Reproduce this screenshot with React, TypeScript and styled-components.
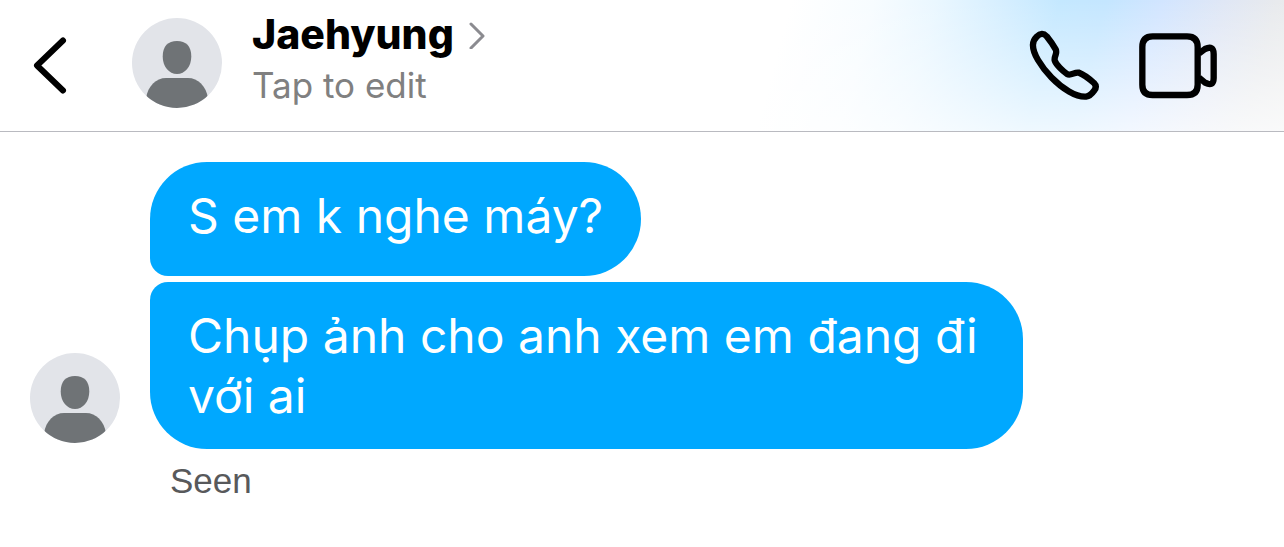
import React from "react";
import styled, { createGlobalStyle } from "styled-components";

const GlobalStyle = createGlobalStyle`
  *, *::before, *::after { box-sizing: border-box; }
  body {
    margin: 0;
    background: #fff;
    font-family: Inter, "Liberation Sans", sans-serif;
  }
`;

const Header = styled.header`
  display: flex;
  align-items: flex-start;
  padding: 0 64px 0 30px;
  min-height: 132px;
  border-bottom: 1px solid #b9bac0;
  background:
    linear-gradient(to bottom, #ffffff00 0%, #ffffff40 35%, #ffffffb8 100%),
    linear-gradient(105deg, #fff calc(100% - 510px), #f7fcff calc(100% - 430px), #eaf7ff calc(100% - 370px), #d4eeff calc(100% - 300px), #c4e8ff calc(100% - 250px), #c4e6ff calc(100% - 205px), #d2e5ff calc(100% - 150px), #e0e7f5 calc(100% - 90px), #e8eaed calc(100% - 40px), #eceded 100%);
`;

const IconButton = styled.button`
  display: flex;
  padding: 0;
  border: 0;
  background: none;
  color: #000;
`;

const BackButton = styled(IconButton)`
  margin: 34px 62px 0 0;
`;

const Contact = styled.div`
  flex: 1;
  display: flex;
  gap: 30px;
`;

const AvatarFrame = styled.div`
  flex: none;
  display: flex;
`;

const HeaderAvatar = styled(AvatarFrame)`
  margin-top: 18px;
`;

const ContactText = styled.div`
  padding-top: 9px;
`;

const NameButton = styled(IconButton)`
  align-items: center;
  gap: 14px;
  font: 800 41px/50px Inter, "Liberation Sans", sans-serif;
`;

const EditLink = styled.a`
  display: block;
  margin-top: 4px;
  color: #808080;
  font: 400 35px/44px Inter, "Liberation Sans", sans-serif;
  text-decoration: none;
`;

const Calls = styled.nav`
  display: flex;
  gap: 35px;
  padding-top: 28px;
`;

const Conversation = styled.main`
  display: flex;
  align-items: flex-end;
  gap: 30px;
  padding: 30px 30px 0;
`;

const SenderAvatar = styled(AvatarFrame)`
  padding-bottom: 6px;
`;

const Messages = styled.div`
  display: flex;
  flex-direction: column;
  align-items: flex-start;
  gap: 6px;
`;

const Bubble = styled.p<{ $last?: boolean }>`
  margin: 0;
  min-height: 114px;
  max-width: 873px;
  padding: 24px 38px 23px;
  border-radius: ${({ $last }) => ($last ? "18px 57px 57px 57px" : "57px 57px 57px 18px")};
  background: #00a8ff;
  color: #fff;
  font-size: 48px;
  line-height: 60px;
`;

const Status = styled.p`
  margin: 10px 0 0 170px;
  color: #58595b;
  font: 400 35px/44px "Liberation Sans", sans-serif;
`;

function Avatar({ id }: { id: string }) {
  return (
    <svg width="90" height="90" viewBox="0 0 90 90" role="img" aria-label="Jaehyung">
      <clipPath id={id}>
        <circle cx="45" cy="45" r="45" />
      </clipPath>
      <g clipPath={`url(#${id})`}>
        <rect width="90" height="90" fill="#e2e4e9" />
        <path d="M45 23C54 23 59.300 28 59.300 38.500C59.300 48.500 53 56 45 56S30.700 48.500 30.700 38.500C30.700 28 36 23 45 23Z" fill="#6f7376" />
        <path d="M14 80C16 68 24 60 34 60H56C66 60 74 68 76 80V90H14Z" fill="#6f7376" />
      </g>
    </svg>
  );
}

export default function App() {
  return (
    <>
      <GlobalStyle />
      <Header>
        <BackButton aria-label="Back">
          <svg width="40" height="62" viewBox="0 0 40 62" fill="none" stroke="currentColor" strokeWidth="6" strokeLinecap="round" strokeLinejoin="round">
            <path d="M33 6.500L7 31.500L33 56.500" />
          </svg>
        </BackButton>
        <Contact>
          <HeaderAvatar>
            <Avatar id="header-avatar" />
          </HeaderAvatar>
          <ContactText>
            <NameButton>
              Jaehyung
              <svg width="18" height="30" viewBox="0 0 18 30" fill="none" stroke="#8b8b90" strokeWidth="3" strokeLinecap="round" strokeLinejoin="round">
                <path d="M3 5L15 17L3 29" />
              </svg>
            </NameButton>
            <EditLink href="#edit">Tap to edit</EditLink>
          </ContactText>
        </Contact>
        <Calls>
          <IconButton aria-label="Voice call">
            <svg width="74" height="74" viewBox="50 54 222 222" fill="none" stroke="currentColor" strokeWidth="19" strokeLinejoin="round">
              <path d="M79 80Q95 64 109 79Q125 99 136 118C142 132 131 137 133 151C137 164 157 183 170 192C182 199 192 185 206 188C222 194 239 208 251 219Q261 229 252 241Q240 258 227 260C166 264 65 154 68 104Q68 91 79 80Z" />
            </svg>
          </IconButton>
          <IconButton aria-label="Video call">
            <svg width="84" height="74" viewBox="377 54 252 222" fill="none" stroke="currentColor" strokeWidth="19" strokeLinejoin="round">
              <path d="M427 79H530Q562 79 562 111V224Q562 255 530 255H427Q396 255 396 224V111Q396 79 427 79Z" />
              <path d="M566 130L584 117Q610 105 610 132V204Q610 231 584 218L566 203" />
            </svg>
          </IconButton>
        </Calls>
      </Header>
      <Conversation>
        <SenderAvatar>
          <Avatar id="sender-avatar" />
        </SenderAvatar>
        <Messages>
          <Bubble>S em k nghe máy?</Bubble>
          <Bubble $last>Chụp ảnh cho anh xem em đang đi với ai</Bubble>
        </Messages>
      </Conversation>
      <Status>Seen</Status>
    </>
  );
}
